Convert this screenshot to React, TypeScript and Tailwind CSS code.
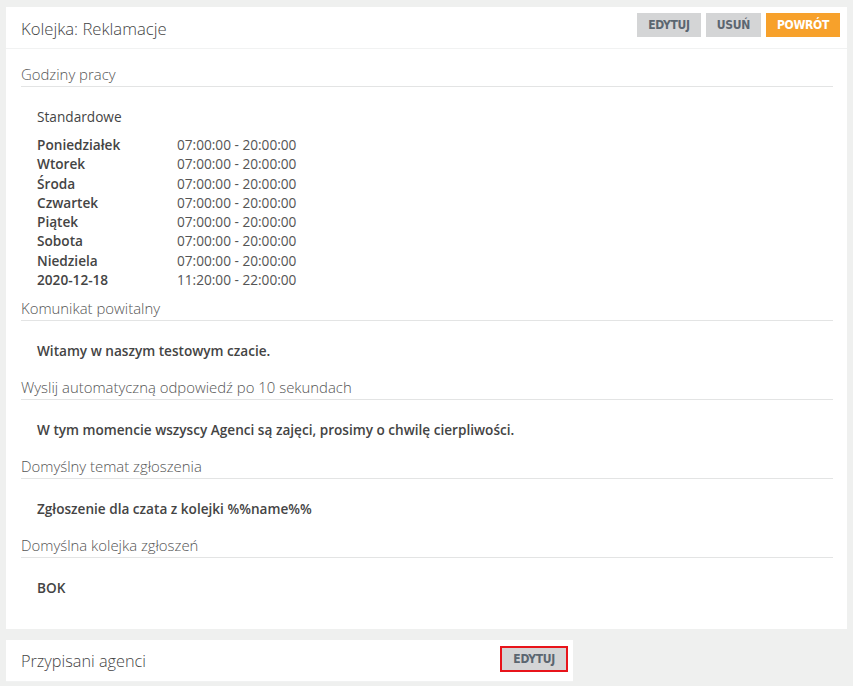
const hours = [
  ["Poniedziałek", "07:00:00 - 20:00:00"],
  ["Wtorek", "07:00:00 - 20:00:00"],
  ["Środa", "07:00:00 - 20:00:00"],
  ["Czwartek", "07:00:00 - 20:00:00"],
  ["Piątek", "07:00:00 - 20:00:00"],
  ["Sobota", "07:00:00 - 20:00:00"],
  ["Niedziela", "07:00:00 - 20:00:00"],
  ["2020-12-18", "11:20:00 - 22:00:00"],
];

const btn =
  "h-6 px-[11px] text-[12px] font-bold leading-6 tracking-[-0.3px] [font-family:'DejaVu_Sans_Condensed','DejaVu_Sans',sans-serif]";

const SectionTitle = ({ children }: { children: React.ReactNode }) => (
  <div className="mr-[14px] border-b border-[#e3e4e4] text-[14.9px] font-light leading-6 text-[#555]">
    {children}
  </div>
);

const Value = ({ children, last }: { children: React.ReactNode; last?: boolean }) => (
  <div className={`pl-4 pt-5 text-[13.6px] font-semibold leading-5 text-[#444] ${last ? "pb-[31px]" : "pb-[14px]"}`}>
    {children}
  </div>
);

const App = () => {
  return (
    <div className="min-h-[686px] bg-[#eff0ef] pt-[7px] pl-[6px] pr-[6px] [font-family:'Open_Sans',sans-serif]">
      <div className="bg-white">
        <div className="flex h-[42px] items-start justify-between border-b border-[#f1f2f2] pl-[15px] pr-[7px]">
          <div className="pt-[10px] text-[16.7px] font-light leading-6 text-[#444]">Kolejka: Reklamacje</div>
          <div className="flex gap-[5px] pt-[6px]">
            <button className={`${btn} bg-[#d4d5d6] text-[#5b6670]`}>EDYTUJ</button>
            <button className={`${btn} bg-[#d4d5d6] text-[#5b6670]`}>USUŃ</button>
            <button className={`${btn} bg-[#f7a12b] text-white`}>POWRÓT</button>
          </div>
        </div>
        <div className="pl-[15px] pt-[13px]">
          <SectionTitle>Godziny pracy</SectionTitle>
          <div className="pl-4 pt-5 pb-[7px] text-[13.65px] leading-5 text-[#444]">
            <div>Standardowe</div>
            <div className="mt-[8px] grid grid-cols-[140px_1fr] leading-[19.3px]">
              {hours.map(([d, h]) => (
                <div key={d} className="contents">
                  <div className="font-semibold">{d}</div>
                  <div className="text-[#555]">{h}</div>
                </div>
              ))}
            </div>
          </div>
          <SectionTitle>Komunikat powitalny</SectionTitle>
          <Value>Witamy w naszym testowym czacie.</Value>
          <SectionTitle>Wyslij automatyczną odpowiedź po 10 sekundach</SectionTitle>
          <Value>W tym momencie wszyscy Agenci są zajęci, prosimy o chwilę cierpliwości.</Value>
          <SectionTitle>Domyślny temat zgłoszenia</SectionTitle>
          <Value>Zgłoszenie dla czata z kolejki %%name%%</Value>
          <SectionTitle>Domyślna kolejka zgłoszeń</SectionTitle>
          <Value last>BOK</Value>
        </div>
      </div>
      <div className="mt-[11px] w-[567px] bg-white">
        <div className="flex h-[42px] items-start justify-between border-b border-[#f1f2f2] pl-[15px] pr-[5px]">
          <div className="pt-[9px] text-[16.3px] font-light leading-6 text-[#444]">Przypisani agenci</div>
          <div className="pt-[5px]">
            <button className={`${btn} h-[26px] border-2 border-[#e8141b] bg-[#d4d5d6] px-[10px] leading-[22px] text-[#5b6670]`}>
              EDYTUJ
            </button>
          </div>
        </div>
      </div>
    </div>
  );
};

export default App;
